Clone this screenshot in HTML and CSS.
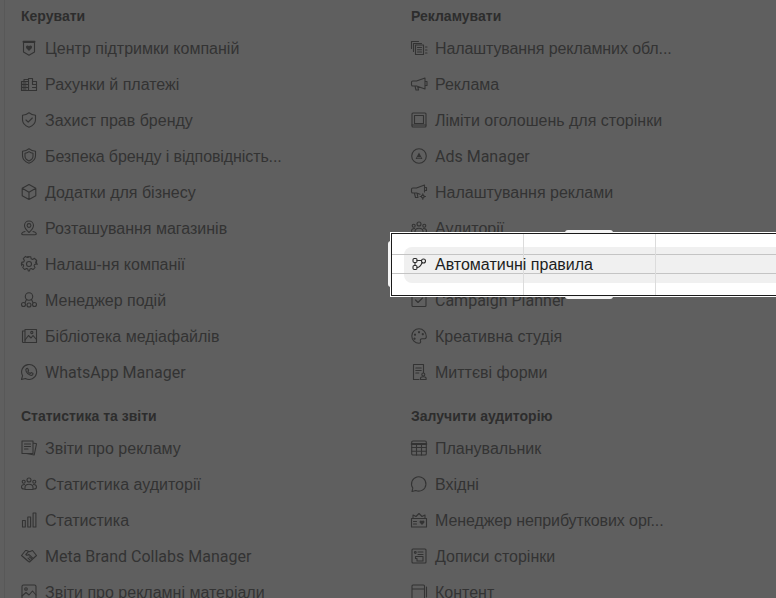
FILE: index.html
```html
<!DOCTYPE html>
<html lang="uk">
<head>
<meta charset="utf-8">
<title>Інструменти</title>
<link rel="stylesheet" href="styles.css">
</head>
<body>
<main class="page">
  <div class="col">
    <section class="group">
      <h2 class="head">Керувати</h2>
      <ul class="list">
        <li class="item"><svg class="ic" viewBox="0 0 18 18"><path d="M3.500 3.500h11v9.600L9 16.200l-5.500-3.100z"/><path class="heavy" d="M3.500 2.800h11"/><path class="fill" d="M9 12L6.300 9.200a1.600 1.600 0 0 1 2.700-2 1.600 1.600 0 0 1 2.700 2z"/></svg><span>Центр підтримки компаній</span></li>
        <li class="item"><svg class="ic" viewBox="0 0 18 18"><path d="M1.500 6.500h7v9h-7zM1.500 9.500h7M1.500 12.500h7M8.500 15.500h8v-9h-4M12.500 9.500h4M12.500 12.500h4M8.500 9.500V3.500h4v6M4 6.500V4.500h4.500M3 8h3M3 11h3M3 14h3"/></svg><span>Рахунки й платежі</span></li>
        <li class="item"><svg class="ic" viewBox="0 0 18 18"><path d="M9 1.800c2 1.600 4 2.300 6.500 2.500v4.500c0 3.400-2.500 6-6.500 7.400-4-1.400-6.500-4-6.500-7.400V4.300C5 4.100 7 3.400 9 1.800z"/><path d="M6 9l2.200 2.200L12.300 7"/></svg><span>Захист прав бренду</span></li>
        <li class="item"><svg class="ic" viewBox="0 0 18 18"><path d="M9 1.800c2 1.600 4 2.300 6.500 2.500v4.500c0 3.400-2.500 6-6.500 7.400-4-1.400-6.500-4-6.500-7.400V4.300C5 4.100 7 3.400 9 1.800z"/><path d="M9 4.600c1.400 1 2.600 1.500 4 1.700v2.900c0 2-1.600 3.700-4 4.700-2.400-1-4-2.700-4-4.700V6.300c1.400-.2 2.600-.7 4-1.700z"/></svg><span class="tight">Безпека бренду і відповідність...</span></li>
        <li class="item"><svg class="ic" viewBox="0 0 18 18"><path d="M9 1.500l6.800 3.800v7.400L9 16.500l-6.800-3.800V5.300zM2.200 5.300L9 9.200l6.800-3.900M9 9.200v7.300"/></svg><span>Додатки для бізнесу</span></li>
        <li class="item"><svg class="ic" viewBox="0 0 18 18"><path d="M9 13.500c-2.800-2.600-4.500-4.800-4.500-7a4.500 4.500 0 0 1 9 0c0 2.200-1.700 4.400-4.500 7z"/><circle cx="9" cy="6.500" r="1.900"/><path d="M5 12.500c-2 .5-3.300 1.400-3.300 2.300 0 .8.700 1 1.500 1h11.600c.8 0 1.500-.2 1.500-1 0-.9-1.300-1.800-3.300-2.300"/></svg><span>Розташування магазинів</span></li>
        <li class="item"><svg class="ic" viewBox="0 0 18 18"><circle cx="9" cy="9" r="2.500"/><path d="M7.400 1.700h3.200l.5 2.100 1.400.6 1.900-1.100 2.200 2.200-1.100 1.900.6 1.400 2.100.5" transform="translate(.1 0)"/><path d="M16.300 7.400v3.200l-2.100.5-.6 1.400 1.100 1.900-2.200 2.200-1.900-1.100-1.400.6-.5 2H7.400l-.5-2-1.400-.6-1.900 1.100-2.200-2.200 1.100-1.900-.6-1.400-2.100-.5" transform="translate(1.400 -.9) scale(.93)"/><path d="M1.700 10.600V7.400l2.100-.5.600-1.400-1.100-1.900 2.200-2.200 1.900 1.100 1.400-.6"/></svg><span>Налаш-ня компанії</span></li>
        <li class="item"><svg class="ic" viewBox="0 0 18 18"><circle cx="9" cy="5.500" r="3.700"/><circle cx="3.500" cy="13.500" r="2"/><circle cx="9" cy="14" r="2"/><circle cx="14.500" cy="13.500" r="2"/><path d="M6.500 8.500L5 11.800M11.500 8.500l1.500 3.300"/></svg><span>Менеджер подій</span></li>
        <li class="item"><svg class="ic" viewBox="0 0 18 18"><path d="M5 2.500h11.500v13H5zM5 4H2.500v10.800c0 .5.300.7.700.7H5"/><path d="M5 13l3.500-4.500 2.500 2.500 2-2.500 3.500 4"/><circle cx="11.800" cy="5.500" r="1.100"/></svg><span>Бібліотека медіафайлів</span></li>
        <li class="item"><svg class="ic" viewBox="0 0 18 18"><path d="M1.500 16.500l1.100-3.800A7.500 7.500 0 1 1 5.400 15.500z"/><path d="M6.500 5.500c-.8.700-.9 1.700-.3 3 .8 1.700 2 2.900 3.800 3.600 1.200.5 2.100.3 2.700-.5l.3-1-1.900-1-.8.900c-1-.4-1.900-1.300-2.400-2.300l.7-.9-.9-1.900z"/></svg><span class="lat">WhatsApp Manager</span></li>
      </ul>
    </section>
    <section class="group">
      <h2 class="head">Статистика та звіти</h2>
      <ul class="list">
        <li class="item"><svg class="ic" viewBox="0 0 18 18"><path d="M2 2h11v12.500H2zM4.500 5h6M4.500 7.500h6M4.500 10h3.500M13 4l3.500.8-2.300 11.200-7.700-1.500"/></svg><span>Звіти про рекламу</span></li>
        <li class="item"><svg class="ic" viewBox="0 0 18 18"><circle cx="9" cy="5" r="2"/><circle cx="3.700" cy="6.700" r="1.500"/><circle cx="14.300" cy="6.700" r="1.500"/><path d="M5 14.500v-2c0-2 1.500-3.200 4-3.200s4 1.200 4 3.200v2zM4.500 9.500c-1.800 0-3 .9-3 2.500 0 1.200.8 2 2.500 2M13.500 9.500c1.800 0 3 .9 3 2.500 0 1.200-.8 2-2.500 2"/></svg><span>Статистика аудиторії</span></li>
        <li class="item"><svg class="ic" viewBox="0 0 18 18"><path d="M2.500 9.500h2.800v6.500H2.500zM7.800 6h2.800v10H7.800zM13.100 2h2.800v14h-2.800z"/></svg><span>Статистика</span></li>
        <li class="item"><svg class="ic" viewBox="0 0 18 18"><path d="M5.500 3.500L1.500 8.500l7 6c.5.400 1.100.400 1.500 0l6.500-6-4-5-3 1.200-3-1.200z"/><path d="M8.500 4.700L5.800 7.500c.9.900 2 .8 3-.2l3.700 3.500M10 13l-2-1.800M11.500 11.700L9.300 9.800"/></svg><span class="lat">Meta Brand Collabs Manager</span></li>
        <li class="item"><svg class="ic" viewBox="0 0 18 18"><path d="M3.500 2h11A1.500 1.500 0 0 1 16 3.500v11a1.500 1.500 0 0 1-1.500 1.500h-11A1.500 1.500 0 0 1 2 14.500v-11A1.500 1.500 0 0 1 3.500 2z"/><circle cx="6" cy="6" r="1.300"/><path d="M2 13l4-3.500 3 2.500 3.500-4 3.500 4"/></svg><span>Звіти про рекламні матеріали</span></li>
      </ul>
    </section>
  </div>
  <div class="col">
    <section class="group">
      <h2 class="head">Рекламувати</h2>
      <ul class="list">
        <li class="item"><svg class="ic" viewBox="0 0 18 18"><path d="M5.500 6h8v9.500h-8zM7.500 8.500h4M7.500 10.800h4M7.500 13h4M3.500 12.500V4.500h8M1.500 9.500V2.500h7M15.500 8h1.500M15.500 11h1.500M15.500 14h1.500"/></svg><span class="tight">Налаштування рекламних обл...</span></li>
        <li class="item"><svg class="ic" viewBox="0 0 18 18"><path d="M15 3L6.500 6H2.800C2 6 1.500 6.500 1.500 7.300v2.400c0 .8.500 1.300 1.300 1.300h3.700L15 14zM15 6.500h2v4h-2M5 11l1 4h2.500l-.8-3.300"/></svg><span>Реклама</span></li>
        <li class="item"><svg class="ic" viewBox="0 0 18 18"><path d="M3 2h12a1 1 0 0 1 1 1v12a1 1 0 0 1-1 1H3a1 1 0 0 1-1-1V3a1 1 0 0 1 1-1z"/><path d="M4.500 4.500h9v8h-9zM2 14h14"/></svg><span>Ліміти оголошень для сторінки</span></li>
        <li class="item"><svg class="ic" viewBox="0 0 18 18"><circle cx="9" cy="9" r="7.300"/><path class="fill" d="M9 5.500l3.400 6.500H5.600z"/><path class="cut" d="M7.500 10.800h3"/></svg><span class="lat">Ads Manager</span></li>
        <li class="item"><svg class="ic" viewBox="0 0 18 18"><path d="M14.500 2L6.500 5H2.800C2 5 1.500 5.500 1.500 6.300v2.400c0 .8.500 1.300 1.300 1.300h3.700l3.500 1.300M14.500 2v7M14.500 4.500h2v3h-2M4.500 10.500l1 4h2.500l-.8-3.500"/><circle cx="12.800" cy="13.500" r="1.400"/><path d="M12.800 10.800v1.300M12.800 14.900v1.300M10.100 13.500h1.300M14.200 13.500h1.300"/></svg><span>Налаштування реклами</span></li>
        <li class="item"><svg class="ic" viewBox="0 0 18 18"><circle cx="9" cy="5" r="2"/><circle cx="3.700" cy="6.700" r="1.500"/><circle cx="14.300" cy="6.700" r="1.500"/><path d="M5 14.500v-2c0-2 1.500-3.200 4-3.200s4 1.200 4 3.200v2zM4.500 9.500c-1.800 0-3 .9-3 2.500 0 1.200.8 2 2.500 2M13.500 9.500c1.800 0 3 .9 3 2.500 0 1.200-.8 2-2.500 2"/></svg><span>Аудиторії</span></li>
        <li class="item spot">
          <div class="spot-box">
            <i class="grip grip-left"></i><i class="grip grip-top"></i><i class="grip grip-bottom"></i>
            <div class="spot-row"></div>
            <i class="rule rule-h1"></i><i class="rule rule-h2"></i><i class="rule rule-v1"></i><i class="rule rule-v2"></i>
          </div>
          <svg class="ic ic-spot" viewBox="0 0 18 18"><rect x="3" y="3.500" width="4" height="4" rx="1.200"/><rect x="3" y="10.500" width="4" height="4" rx="1.200"/><circle cx="13.500" cy="6" r="2"/><path d="M7 5.500h4.500M5 7.500v3M7 12.500c2.500 0 3.800-1.500 5-4.800"/></svg>
          <span class="spot-label">Автоматичні правила</span>
        </li>
        <li class="item"><svg class="ic" viewBox="0 0 18 18"><path d="M3 2.500h12a1 1 0 0 1 1 1v11a1 1 0 0 1-1 1H3a1 1 0 0 1-1-1v-11a1 1 0 0 1 1-1z"/><path d="M5.500 9l2.500 2.500 4.500-4.500"/></svg><span class="lat">Campaign Planner</span></li>
        <li class="item"><svg class="ic" viewBox="0 0 18 18"><path d="M9 1.800a7.200 7.200 0 1 0 0 14.400c1.500 0 2-1 1.500-2.200-.5-1.300.2-2.300 1.500-2.300h2.800c1 0 1.500-.7 1.500-2.200 0-4.200-3.200-7.700-7.300-7.700z"/><path class="fill" d="M5 6.500a1.100 1.100 0 1 0 .01 0zM9 4a1.100 1.100 0 1 0 .01 0zM12.800 6a1.100 1.100 0 1 0 .01 0zM4.500 10.500a1.100 1.100 0 1 0 .01 0z"/></svg><span>Креативна студія</span></li>
        <li class="item"><svg class="ic" viewBox="0 0 18 18"><path d="M9 16.500H3.500V1.500h10v8M5.800 5h5.400M5.800 7.500h5.400M5.800 10h3"/><circle cx="13.300" cy="11.500" r="1.500"/><path d="M10.500 16.500v-1.200c0-1 .8-1.500 2.800-1.500s2.800.5 2.800 1.500v1.200z"/></svg><span>Миттєві форми</span></li>
      </ul>
    </section>
    <section class="group">
      <h2 class="head">Залучити аудиторію</h2>
      <ul class="list">
        <li class="item"><svg class="ic" viewBox="0 0 18 18"><path d="M3 2h12a1.300 1.300 0 0 1 1.300 1.300v11.400A1.300 1.300 0 0 1 15 16H3a1.300 1.300 0 0 1-1.300-1.300V3.300A1.300 1.300 0 0 1 3 2z"/><path class="heavy" d="M1.700 5h14.600"/><path d="M1.700 8.500h14.600M1.700 12.200h14.600M6.500 5v11M11.500 5v11"/></svg><span>Планувальник</span></li>
        <li class="item"><svg class="ic" viewBox="0 0 18 18"><path d="M2 16.500l.8-3.500A7.200 7.200 0 1 1 5.800 15.500z"/></svg><span>Вхідні</span></li>
        <li class="item"><svg class="ic" viewBox="0 0 18 18"><path d="M1.500 7.500h15v8.500h-15zM3 7.500V4l3 1.500 3-3 3 3L15 4v3.500M3.500 10.500h3M3.500 13h3"/><path class="fill" d="M12 14l-2.200-2.300a1.300 1.300 0 0 1 2.200-1.600 1.300 1.300 0 0 1 2.200 1.600z"/></svg><span class="tight">Менеджер неприбуткових орг...</span></li>
        <li class="item"><svg class="ic" viewBox="0 0 18 18"><path d="M3 2h12a1 1 0 0 1 1 1v12a1 1 0 0 1-1 1H3a1 1 0 0 1-1-1V3a1 1 0 0 1 1-1z"/><path d="M8 5h5M8 7.500h5M5.500 9.500h7.500v4.500H7v-2.500H5.500z"/><circle cx="5.300" cy="5.500" r=".9"/></svg><span>Дописи сторінки</span></li>
        <li class="item"><svg class="ic" viewBox="0 0 18 18"><path d="M3 2h10.500a1 1 0 0 1 1 1v12a1 1 0 0 1-1 1H3a1 1 0 0 1-1-1V3a1 1 0 0 1 1-1zM2 6h12.500M16.500 4v10"/></svg><span>Контент</span></li>
      </ul>
    </section>
  </div>
</main>
</body>
</html>
```
FILE: styles.css
```css
html, body {
  margin: 0;
  height: 598px;
  overflow: hidden;
  background: #5f5f5f;
}

.page {
  display: grid;
  grid-template-columns: 390px 1fr;
  margin-left: 4px;
  padding: 2px 0 0 16px;
  min-height: 598px;
  border-left: 1px solid #585858;
  box-sizing: border-box;
  font-family: "Liberation Sans", Arial, sans-serif;
  color: #333;
}

.col {
  display: flex;
  flex-direction: column;
  gap: 12px;
  min-width: 0;
}

.head {
  margin: 0;
  height: 28px;
  line-height: 28px;
  font-size: 14px;
  font-weight: 700;
  color: #2d2d2d;
}

.list {
  margin: 0;
  padding: 0;
  list-style: none;
}

.item {
  display: flex;
  align-items: center;
  gap: 7px;
  height: 36px;
  margin-left: -1px;
  font-size: 16px;
  white-space: nowrap;
}

.item span {
  padding-top: 2px;
}

.item .lat {
  padding-top: 0;
  font-family: Roboto, "Liberation Sans", sans-serif;
}

.tight {
  letter-spacing: -0.1px;
}

.ic {
  flex: none;
  width: 18px;
  height: 18px;
  fill: none;
  stroke: #333;
  stroke-width: 1.1;
  stroke-linejoin: round;
  stroke-linecap: round;
}

.ic .fill { fill: #333; stroke: none; }
.ic .heavy { stroke-width: 2; }
.ic .cut { stroke: #5f5f5f; stroke-width: 1; }

.spot { position: relative; color: #1c1e21; }
.spot-label, .ic-spot { position: relative; z-index: 2; }
.ic-spot { stroke: #2a2a2a; }

.spot-box {
  position: absolute;
  left: -19px;
  top: -13px;
  width: 420px;
  height: 63px;
  box-sizing: border-box;
  background: #fff;
  border: 1px solid #1a1a1a;
  outline: 1px solid #fff;
  z-index: 1;
}

.spot-row {
  position: absolute;
  left: 12px;
  right: 0;
  top: 13px;
  height: 36px;
  border-radius: 8px;
  background: #f0f0f0;
}

.rule { position: absolute; background: #c4c4c4; }
.rule-h1 { left: 0; right: 0; top: 20px; height: 1px; }
.rule-h2 { left: 0; right: 0; top: 39px; height: 1px; }
.rule-v1 { top: 0; bottom: 0; left: 131px; width: 1px; background: #dcdcdc; }
.rule-v2 { top: 0; bottom: 0; left: 263px; width: 1px; background: #dcdcdc; }

.grip { position: absolute; background: #f4f4f4; }
.grip-left { left: -4px; top: 7px; width: 3px; height: 46px; border-radius: 3px 0 0 3px; }
.grip-top { left: 173px; top: -4px; width: 48px; height: 3px; border-radius: 4px 4px 0 0; }
.grip-bottom { left: 173px; bottom: -4px; width: 48px; height: 3px; border-radius: 0 0 4px 4px; }
```
